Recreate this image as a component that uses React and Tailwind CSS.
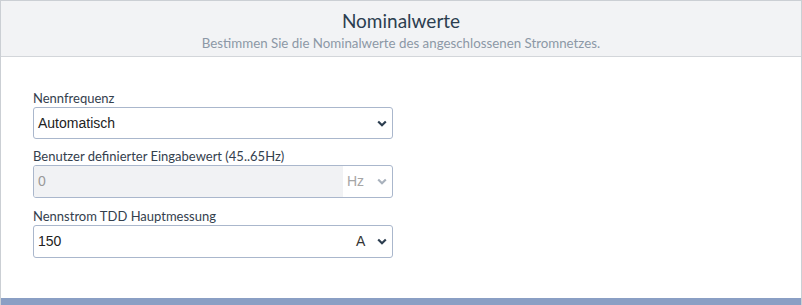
import React from 'react'

function Chevron({ className }) {
  return (
    <svg width="10" height="7" viewBox="0 0 10 7" className={className}>
      <polyline points="1.2,1.5 5,5.2 8.8,1.5" fill="none" stroke="currentColor" strokeWidth="2.2" />
    </svg>
  )
}

function Field({ label, className, children }) {
  return (
    <div className={`flex flex-col ${className || ''}`}>
      <label className="h-[17px] text-[13px] leading-[17px] text-[#34404d]">{label}</label>
      {children}
    </div>
  )
}

export default function App() {
  const input = "font-['Liberation_Sans',Arial,sans-serif] text-[14px]"
  return (
    <div className="w-[802px] h-[305px] bg-white font-['Lato','Open_Sans',sans-serif]">
      <div className="h-full flex flex-col border-x border-t border-[#cbcfd4]">
        <div className="h-[56px] shrink-0 bg-[#f2f3f5] border-b border-[#d3d6da] flex flex-col items-center pt-[8px]">
          <h2 className="text-[19px] leading-[24px] text-[#2c3e50]">Nominalwerte</h2>
          <p className="text-[13.3px] leading-[17px] text-[#8c98a6] mt-[2px]">
            Bestimmen Sie die Nominalwerte des angeschlossenen Stromnetzes.
          </p>
        </div>

        <div className="flex-1 pl-[32px] pt-[33px] flex flex-col">
          <Field label="Nennfrequenz">
            <div className={`w-[360px] h-[32px] border border-[#aab7cc] rounded-[3px] flex items-center justify-between pl-[4px] pr-[5px] text-[#222] ${input}`}>
              <span>Automatisch</span>
              <Chevron className="text-[#2c3e50]" />
            </div>
          </Field>

          <Field label="Benutzer definierter Eingabewert (45..65Hz)" className="mt-[9px]">
            <div className={`w-[360px] h-[33px] border border-[#aab7cc] rounded-[3px] flex overflow-hidden ${input}`}>
              <div className="w-[309px] h-full bg-[#f1f2f4] flex items-center pl-[4px] text-[#999]">0</div>
              <div className="flex-1 flex items-center justify-between pl-[4px] pr-[5px] text-[#a6a6a6]">
                <span>Hz</span>
                <Chevron className="text-[#a9b2bd]" />
              </div>
            </div>
          </Field>

          <Field label="Nennstrom TDD Hauptmessung" className="mt-[10px]">
            <div className={`w-[360px] h-[33px] border border-[#aab7cc] rounded-[3px] flex ${input}`}>
              <div className="w-[309px] h-full flex items-center pl-[4px] text-[#222]">150</div>
              <div className="flex-1 flex items-center justify-between pl-[13px] pr-[5px] text-[#333]">
                <span>A</span>
                <Chevron className="text-[#2c3e50]" />
              </div>
            </div>
          </Field>
        </div>

        <div className="h-[7px] shrink-0 bg-[#8a9fc4]"></div>
      </div>
    </div>
  )
}
